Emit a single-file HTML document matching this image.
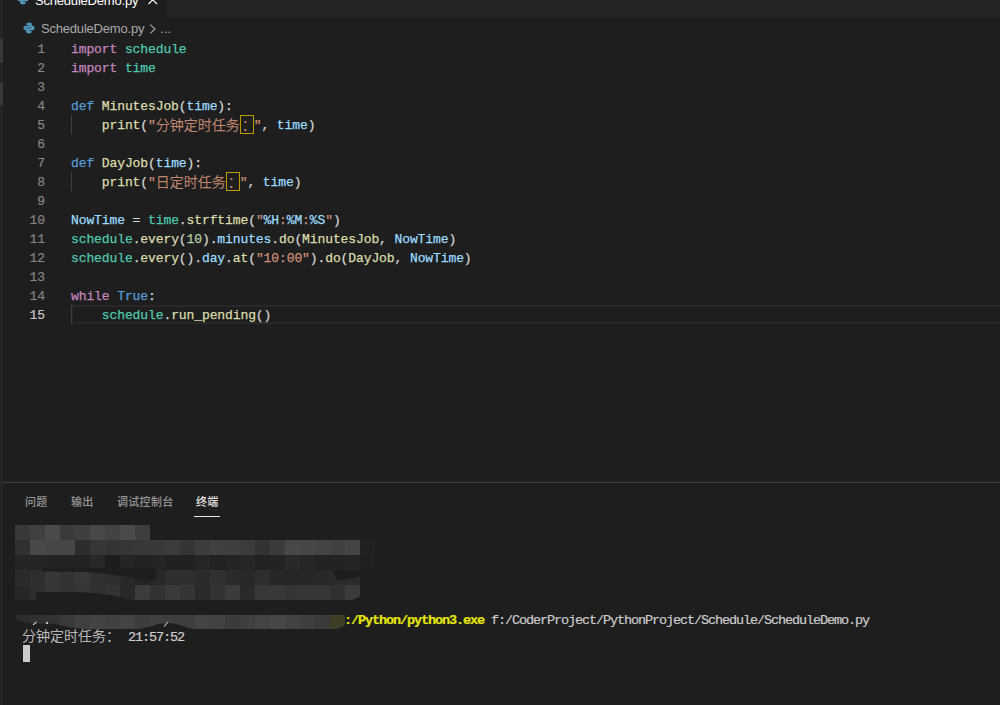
<!DOCTYPE html>
<html lang="zh-CN">
<head>
<meta charset="utf-8">
<title>ScheduleDemo.py</title>
<style>
*{margin:0;padding:0;box-sizing:border-box}
html,body{width:1000px;height:705px;overflow:hidden;background:#1e1e1e}
body{position:relative;font-family:"Liberation Sans","Noto Sans CJK SC",sans-serif;color:#d4d4d4}
.abs{position:absolute}
/* left strip */
#strip{left:0;top:0;width:3px;height:705px;background:#252526}
#strip i{position:absolute;left:0;width:3px;background:#37373d;display:block}
/* tab bar */
#tabbar{left:3px;top:0;width:997px;height:17px;background:#252526}
#tab{left:0;top:0;width:164px;height:17px;background:#1e1e1e;overflow:hidden}
#tabtxt{left:32px;top:-7px;letter-spacing:-0.2px;font-size:13px;line-height:16px;color:#ffffff;white-space:nowrap}
/* breadcrumb */
#crumb{left:41px;top:21px;letter-spacing:-0.2px;font-size:13px;line-height:16px;color:#a9a9a9;white-space:nowrap}
/* editor */
#editor{left:0;top:39px;width:1000px;height:443px}
.ln{-webkit-text-stroke:0.2px;margin-top:1px;position:absolute;left:0;width:45px;text-align:right;height:19px;line-height:19px;font-family:"Liberation Mono",monospace;font-size:13px;letter-spacing:-0.1px;color:#858585;white-space:pre}
.cl{-webkit-text-stroke:0.25px;margin-top:1px;position:absolute;left:71px;height:19px;line-height:19px;font-family:"Liberation Mono","Noto Sans CJK SC",monospace;font-size:13px;letter-spacing:-0.1px;color:#d4d4d4;white-space:pre}
.cj{font-family:"Noto Sans CJK SC",sans-serif;font-weight:300;font-size:14px;margin-top:-1px;letter-spacing:0;display:inline-block;width:14px;text-align:center;line-height:19px;vertical-align:top;height:19px}
.k{color:#c586c0}.m{color:#4ec9b0}.d{color:#569cd6}.f{color:#dcdcaa}.v{color:#9cdcfe}.s{color:#ce9178}.n{color:#b5cea8}
.guide{position:absolute;left:71px;width:1px;height:19px;background:#404040}
.ub{box-shadow:inset 0 0 0 1px #bd9b03;text-indent:2px}
/* panel */
#pborder{left:3px;top:482px;width:997px;height:1px;background:#414141}
.pt{position:absolute;top:494px;font-weight:500;margin-left:1px;font-size:11px;line-height:16px;color:#979797;white-space:nowrap;letter-spacing:0.3px}
#pul{left:194px;top:516px;width:26px;height:1px;background:#e7e7e7}
/* terminal */
.tl{-webkit-text-stroke:0.2px;position:absolute;left:22px;height:17px;line-height:17px;font-family:"Liberation Mono","Noto Sans CJK SC",monospace;font-size:13.5px;letter-spacing:-1.1px;color:#cccccc;white-space:pre}
.tcj{font-family:"Noto Sans CJK SC",sans-serif;font-weight:300;font-size:14px;position:relative;top:-2px;letter-spacing:0;display:inline-block;width:14px;text-align:center;line-height:17px;vertical-align:top;height:17px}
#cursor{left:23px;top:645px;width:7px;height:17px;background:#cccccc}
#mosaic i{position:absolute;display:block}
</style>
</head>
<body>
<div id="strip" class="abs"><i style="top:39px;height:22px"></i><i style="top:61px;height:1px;background:#4a4a4f"></i><i style="top:83px;height:22px"></i></div>

<div id="tabbar" class="abs">
  <div id="tab" class="abs">
    <svg class="abs" style="left:13.5px;top:-7.5px" width="12" height="12" viewBox="0 0 14 14"><path d="M6.9 0.6c-2.6 0-2.9 1.1-2.9 1.9v1.4h3v0.5H2.7C1.5 4.4 0.6 5.3 0.6 7.1c0 1.8 0.9 2.6 2 2.6h1.2V8.7c0-1.1 0.9-2 2-2h3c0.9 0 1.6-0.7 1.6-1.6V2.5c0-0.9-0.8-1.9-3.5-1.9z" fill="#4a91b6"/><path d="M7.1 13.4c2.6 0 2.9-1.1 2.9-1.9v-1.4H7V9.6h4.3c1.2 0 2.1-0.9 2.1-2.7 0-1.8-0.9-2.6-2-2.6h-1.2v1c0 1.1-0.9 2-2 2h-3c-0.9 0-1.6 0.7-1.6 1.6v2.6c0 0.9 0.8 1.9 3.5 1.9z" fill="#519aba"/></svg>
    <div id="tabtxt" class="abs">ScheduleDemo.py</div>
    <svg class="abs" style="left:145px;top:-5px" width="9.5" height="9.5" viewBox="0 0 10 10"><path d="M0.5 0.5L9.5 9.5M9.5 0.5L0.5 9.5" stroke="#ffffff" stroke-width="1.2" fill="none"/></svg>
  </div>
</div>

<svg class="abs" style="left:23px;top:22px" width="12" height="12" viewBox="0 0 14 14"><path d="M6.9 0.6c-2.6 0-2.9 1.1-2.9 1.9v1.4h3v0.5H2.7C1.5 4.4 0.6 5.3 0.6 7.1c0 1.8 0.9 2.6 2 2.6h1.2V8.7c0-1.1 0.9-2 2-2h3c0.9 0 1.6-0.7 1.6-1.6V2.5c0-0.9-0.8-1.9-3.5-1.9z" fill="#4a91b6"/><path d="M7.1 13.4c2.6 0 2.9-1.1 2.9-1.9v-1.4H7V9.6h4.3c1.2 0 2.1-0.9 2.1-2.7 0-1.8-0.9-2.6-2-2.6h-1.2v1c0 1.1-0.9 2-2 2h-3c-0.9 0-1.6 0.7-1.6 1.6v2.6c0 0.9 0.8 1.9 3.5 1.9z" fill="#519aba"/></svg>
<div id="crumb" class="abs">ScheduleDemo.py</div>
<svg class="abs" style="left:149px;top:23px" width="8" height="12" viewBox="0 0 8 12"><path d="M1.3 1.7L6 6L1.3 10.3" stroke="#a9a9a9" stroke-width="1.1" fill="none"/></svg>
<div class="abs" style="left:160px;top:21px;font-size:13px;line-height:16px;color:#a9a9a9;letter-spacing:0.2px">...</div>

<div id="editor" class="abs">
<div class="abs" style="left:71px;top:266px;width:929px;height:19px;border:2px solid #282828;border-right:0"></div>
<div class="guide" style="top:76px"></div><div class="guide" style="top:133px"></div><div class="guide" style="top:266px"></div>
<div class="ln" style="top:0">1</div><div class="cl" style="top:0"><span class="k">import</span> <span class="m">schedule</span></div>
<div class="ln" style="top:19px">2</div><div class="cl" style="top:19px"><span class="k">import</span> <span class="m">time</span></div>
<div class="ln" style="top:38px">3</div>
<div class="ln" style="top:57px">4</div><div class="cl" style="top:57px"><span class="d">def</span> <span class="f">MinutesJob</span>(<span class="v">time</span>):</div>
<div class="ln" style="top:76px">5</div><div class="cl" style="top:76px">    <span class="f">print</span>(<span class="s">"<span class="cj">分</span><span class="cj">钟</span><span class="cj">定</span><span class="cj">时</span><span class="cj">任</span><span class="cj">务</span><span class="cj ub">：</span>"</span>, <span class="v">time</span>)</div>
<div class="ln" style="top:95px">6</div>
<div class="ln" style="top:114px">7</div><div class="cl" style="top:114px"><span class="d">def</span> <span class="f">DayJob</span>(<span class="v">time</span>):</div>
<div class="ln" style="top:133px">8</div><div class="cl" style="top:133px">    <span class="f">print</span>(<span class="s">"<span class="cj">日</span><span class="cj">定</span><span class="cj">时</span><span class="cj">任</span><span class="cj">务</span><span class="cj ub">：</span>"</span>, <span class="v">time</span>)</div>
<div class="ln" style="top:152px">9</div>
<div class="ln" style="top:171px">10</div><div class="cl" style="top:171px"><span class="v">NowTime</span> = <span class="m">time</span>.<span class="f">strftime</span>(<span class="s">"<span class="v">%H</span>:<span class="v">%M</span>:<span class="v">%S</span>"</span>)</div>
<div class="ln" style="top:190px">11</div><div class="cl" style="top:190px"><span class="m">schedule</span>.<span class="f">every</span>(<span class="n">10</span>).<span class="v">minutes</span>.<span class="f">do</span>(<span class="f">MinutesJob</span>, <span class="v">NowTime</span>)</div>
<div class="ln" style="top:209px">12</div><div class="cl" style="top:209px"><span class="m">schedule</span>.<span class="f">every</span>().<span class="v">day</span>.<span class="f">at</span>(<span class="s">"10:00"</span>).<span class="f">do</span>(<span class="f">DayJob</span>, <span class="v">NowTime</span>)</div>
<div class="ln" style="top:228px">13</div>
<div class="ln" style="top:247px">14</div><div class="cl" style="top:247px"><span class="k">while</span> <span class="d">True</span>:</div>
<div class="ln" style="top:266px;color:#c6c6c6">15</div><div class="cl" style="top:266px">    <span class="m">schedule</span>.<span class="f">run_pending</span>()</div>

</div>

<div id="pborder" class="abs"></div>
<div class="pt" style="left:24px">问题</div>
<div class="pt" style="left:70px">输出</div>
<div class="pt" style="left:116px">调试控制台</div>
<div class="pt" style="left:195px;color:#e7e7e7">终端</div>
<div id="pul" class="abs"></div>

<div id="mosaic" class="abs" style="left:0;top:0">
<!--MS-->
<svg class="abs" style="left:0;top:520px" width="400" height="115" viewBox="0 520 400 115" shape-rendering="crispEdges">
<rect x="15" y="525" width="15" height="15" fill="#383838"/>
<rect x="30" y="525" width="15" height="15" fill="#404040"/>
<rect x="45" y="525" width="15" height="15" fill="#4b4b4b"/>
<rect x="60" y="525" width="15" height="15" fill="#3a3a3a"/>
<rect x="75" y="525" width="15" height="15" fill="#3f3f3f"/>
<rect x="90" y="525" width="15" height="15" fill="#484848"/>
<rect x="105" y="525" width="15" height="15" fill="#434343"/>
<rect x="120" y="525" width="15" height="15" fill="#4a4a4a"/>
<rect x="135" y="525" width="15" height="15" fill="#3e3e3e"/>
<rect x="15" y="540" width="15" height="15" fill="#303030"/>
<rect x="30" y="540" width="15" height="15" fill="#484848"/>
<rect x="45" y="540" width="15" height="15" fill="#464646"/>
<rect x="60" y="540" width="15" height="15" fill="#474747"/>
<rect x="75" y="540" width="15" height="15" fill="#2d2d2d"/>
<rect x="90" y="540" width="15" height="15" fill="#363636"/>
<rect x="105" y="540" width="15" height="15" fill="#343434"/>
<rect x="120" y="540" width="15" height="15" fill="#363636"/>
<rect x="135" y="540" width="15" height="15" fill="#383838"/>
<rect x="150" y="540" width="15" height="15" fill="#393939"/>
<rect x="165" y="540" width="15" height="15" fill="#3c3c3c"/>
<rect x="180" y="540" width="15" height="15" fill="#353535"/>
<rect x="195" y="540" width="15" height="15" fill="#3d3d3d"/>
<rect x="210" y="540" width="15" height="15" fill="#404040"/>
<rect x="225" y="540" width="15" height="15" fill="#3f3f3f"/>
<rect x="240" y="540" width="15" height="15" fill="#3c3c3c"/>
<rect x="255" y="540" width="15" height="15" fill="#333333"/>
<rect x="270" y="540" width="15" height="15" fill="#3b3b3b"/>
<rect x="285" y="540" width="15" height="15" fill="#484848"/>
<rect x="300" y="540" width="15" height="15" fill="#474747"/>
<rect x="315" y="540" width="15" height="15" fill="#444444"/>
<rect x="330" y="540" width="15" height="15" fill="#414141"/>
<rect x="345" y="540" width="15" height="15" fill="#444444"/>
<rect x="360" y="540" width="15" height="15" fill="#212121"/>
<rect x="15" y="555" width="15" height="15" fill="#252525"/>
<rect x="30" y="555" width="15" height="15" fill="#242424"/>
<rect x="45" y="555" width="15" height="15" fill="#232323"/>
<rect x="60" y="555" width="15" height="15" fill="#232323"/>
<rect x="75" y="555" width="15" height="15" fill="#222222"/>
<rect x="90" y="555" width="15" height="15" fill="#282828"/>
<rect x="105" y="555" width="15" height="15" fill="#1d1d1d"/>
<rect x="120" y="555" width="15" height="15" fill="#252525"/>
<rect x="135" y="555" width="15" height="15" fill="#222222"/>
<rect x="150" y="555" width="15" height="15" fill="#242424"/>
<rect x="165" y="555" width="15" height="15" fill="#212121"/>
<rect x="180" y="555" width="15" height="15" fill="#212121"/>
<rect x="195" y="555" width="15" height="15" fill="#262626"/>
<rect x="210" y="555" width="15" height="15" fill="#222222"/>
<rect x="225" y="555" width="15" height="15" fill="#252525"/>
<rect x="240" y="555" width="15" height="15" fill="#262626"/>
<rect x="255" y="555" width="15" height="15" fill="#222222"/>
<rect x="270" y="555" width="15" height="15" fill="#232323"/>
<rect x="285" y="555" width="15" height="15" fill="#292929"/>
<rect x="300" y="555" width="15" height="15" fill="#262626"/>
<rect x="315" y="555" width="15" height="15" fill="#232323"/>
<rect x="330" y="555" width="15" height="15" fill="#232323"/>
<rect x="345" y="555" width="15" height="15" fill="#242424"/>
<rect x="360" y="555" width="15" height="15" fill="#202020"/>
<rect x="15" y="570" width="15" height="15" fill="#2a2a2a"/>
<rect x="30" y="570" width="15" height="15" fill="#2e2e2e"/>
<rect x="45" y="570" width="15" height="15" fill="#373737"/>
<rect x="60" y="570" width="15" height="15" fill="#333333"/>
<rect x="75" y="570" width="15" height="15" fill="#383838"/>
<rect x="90" y="570" width="15" height="15" fill="#303030"/>
<rect x="105" y="570" width="15" height="15" fill="#2e2e2e"/>
<rect x="120" y="570" width="15" height="15" fill="#282828"/>
<rect x="135" y="570" width="15" height="15" fill="#242424"/>
<rect x="150" y="570" width="15" height="15" fill="#282828"/>
<rect x="165" y="570" width="15" height="15" fill="#2e2e2e"/>
<rect x="180" y="570" width="15" height="15" fill="#2f2f2f"/>
<rect x="195" y="570" width="15" height="15" fill="#2b2b2b"/>
<rect x="210" y="570" width="15" height="15" fill="#313131"/>
<rect x="225" y="570" width="15" height="15" fill="#2a2a2a"/>
<rect x="240" y="570" width="15" height="15" fill="#282828"/>
<rect x="255" y="570" width="15" height="15" fill="#2e2e2e"/>
<rect x="270" y="570" width="15" height="15" fill="#272727"/>
<rect x="285" y="570" width="15" height="15" fill="#262626"/>
<rect x="300" y="570" width="15" height="15" fill="#272727"/>
<rect x="315" y="570" width="15" height="15" fill="#282828"/>
<rect x="330" y="570" width="15" height="15" fill="#2a2a2a"/>
<rect x="345" y="570" width="15" height="15" fill="#2b2b2b"/>
<rect x="15" y="585" width="15" height="15" fill="#272727"/>
<rect x="30" y="585" width="15" height="15" fill="#2e2e2e"/>
<rect x="45" y="585" width="15" height="15" fill="#363636"/>
<rect x="60" y="585" width="15" height="15" fill="#333333"/>
<rect x="75" y="585" width="15" height="15" fill="#363636"/>
<rect x="90" y="585" width="15" height="15" fill="#303030"/>
<rect x="105" y="585" width="15" height="15" fill="#333333"/>
<rect x="120" y="585" width="15" height="15" fill="#282828"/>
<rect x="135" y="585" width="15" height="15" fill="#3c3c3c"/>
<rect x="150" y="585" width="15" height="15" fill="#323232"/>
<rect x="165" y="585" width="15" height="15" fill="#3a3a3a"/>
<rect x="180" y="585" width="15" height="15" fill="#353535"/>
<rect x="195" y="585" width="15" height="15" fill="#2a2a2a"/>
<rect x="210" y="585" width="15" height="15" fill="#333333"/>
<rect x="225" y="585" width="15" height="15" fill="#3b3b3b"/>
<rect x="240" y="585" width="15" height="15" fill="#2a2a2a"/>
<rect x="255" y="585" width="15" height="15" fill="#383838"/>
<rect x="270" y="585" width="15" height="15" fill="#383838"/>
<rect x="285" y="585" width="15" height="15" fill="#353535"/>
<rect x="300" y="585" width="15" height="15" fill="#363636"/>
<rect x="315" y="585" width="15" height="15" fill="#373737"/>
<rect x="330" y="585" width="15" height="15" fill="#303030"/>
<rect x="345" y="585" width="15" height="15" fill="#3a3a3a"/>
<rect x="15" y="615" width="15" height="14" fill="#2c2c2c"/>
<rect x="30" y="615" width="15" height="14" fill="#303030"/>
<rect x="45" y="615" width="15" height="14" fill="#333333"/>
<rect x="60" y="615" width="15" height="14" fill="#3a3a3a"/>
<rect x="75" y="615" width="15" height="14" fill="#404040"/>
<rect x="90" y="615" width="15" height="14" fill="#434343"/>
<rect x="105" y="615" width="15" height="14" fill="#414141"/>
<rect x="120" y="615" width="15" height="14" fill="#444444"/>
<rect x="135" y="615" width="15" height="14" fill="#3d3d3d"/>
<rect x="150" y="615" width="15" height="14" fill="#404040"/>
<rect x="165" y="615" width="15" height="14" fill="#3e3e3e"/>
<rect x="180" y="615" width="15" height="14" fill="#3e3e3e"/>
<rect x="195" y="615" width="15" height="14" fill="#444444"/>
<rect x="210" y="615" width="15" height="14" fill="#424242"/>
<rect x="225" y="615" width="15" height="14" fill="#3b3b3b"/>
<rect x="240" y="615" width="15" height="14" fill="#3f3f3f"/>
<rect x="255" y="615" width="15" height="14" fill="#444444"/>
<rect x="270" y="615" width="15" height="14" fill="#474747"/>
<rect x="285" y="615" width="15" height="14" fill="#434343"/>
<rect x="300" y="615" width="15" height="14" fill="#3f3f3f"/>
<rect x="315" y="615" width="15" height="14" fill="#3a3a3a"/>
<rect x="330" y="615" width="15" height="14" fill="#3e3d25"/>
<g shape-rendering="auto" fill="#1e1e1e">
<path d="M42 568 L150 568 Q156 568 157 572 Q158 579 154 581 L150 581 L122 576 L88 572 L42 571.5 Z"/>
<path d="M36 592 L80 592 L110 595 L135 600 L135 601 L36 601 Z"/>
<path d="M332 570 L361 570 L361 576 L345 580 L337 580 Z"/>
<path d="M350 601 L361 596 L361 601 Z"/>
<path d="M13 615 L16 615 Q15 620 22 622 L28 623 L55 624 Q70 628 90 629.5 L136 630 Q150 627 158 624 L170 623 Q180 624 188 628 L195 629 L336 629 Q346 627 346.5 620 L346.5 614 L349 614 L349 633 L13 633 Z"/>
</g>
<path d="M33 625 L36.5 622 M164 626.5 L168 622" stroke="#c8c8c8" stroke-width="1.1" fill="none" shape-rendering="auto"/><rect x="46" y="622" width="1.5" height="1.5" fill="#bbb"/>
</svg>
<!--ME-->
</div>

<div class="tl" style="top:612px;left:344px"><b style="color:#e5e510">:/Python/python3.exe</b> f:/CoderProject/PythonProject/Schedule/ScheduleDemo.py</div>
<div class="tl" style="top:629px"><span class="tcj">分</span><span class="tcj">钟</span><span class="tcj">定</span><span class="tcj">时</span><span class="tcj">任</span><span class="tcj">务</span><span class="tcj">：</span><span style="margin-left:1px"> 21:57:52</span></div>
<div id="cursor" class="abs"></div>
</body>
</html>
